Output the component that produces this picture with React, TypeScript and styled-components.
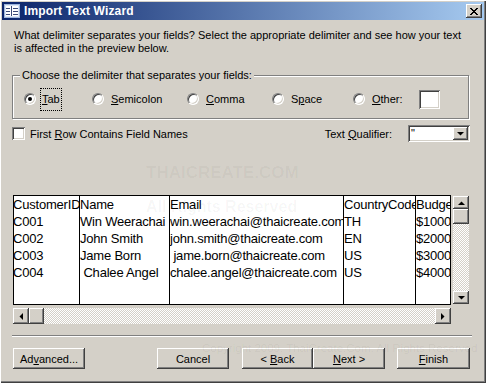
import React from 'react';
import styled, { createGlobalStyle } from 'styled-components';

const GlobalStyle = createGlobalStyle`
  html, body {
    margin: 0;
    padding: 0;
    background: #ffffff;
  }
  body {
    font-family: 'Liberation Sans', Arial, sans-serif;
    font-size: 11px;
    color: #000000;
  }
`;

const raised = `
  box-shadow: inset -1px -1px #404040, inset 1px 1px #ffffff,
    inset -2px -2px #808080, inset 2px 2px #d4d0c8;
`;

const sunken = `
  box-shadow: inset 1px 1px #808080, inset -1px -1px #ffffff,
    inset 2px 2px #404040, inset -2px -2px #d4d0c8;
`;

const checker = `
  background: repeating-conic-gradient(#ffffff 0 25%, #d4d0c8 0 50%) 0 0 / 2px 2px;
`;

const Window = styled.div`
  position: relative;
  width: 486px;
  height: 383px;
  box-sizing: border-box;
  padding: 2px;
  background: #d4d0c8;
  box-shadow: inset 1px 1px #ffffff, inset -1px -1px #404040, inset -2px -2px #808080;
  display: flex;
  flex-direction: column;
  overflow: hidden;
`;

const TitleBar = styled.div`
  height: 18px;
  display: flex;
  align-items: center;
  gap: 4px;
  padding: 0 2px;
  background: linear-gradient(to right, #0a246a, #a6caf0);
  color: #ffffff;
  font-weight: bold;
  font-size: 12px;
  letter-spacing: 0.15px;
`;

const CloseButton = styled.div`
  width: 16px;
  height: 14px;
  margin-left: auto;
  display: flex;
  align-items: center;
  justify-content: center;
  background: #d4d0c8;
  ${raised}
`;

const Body = styled.div`
  display: flex;
  flex-direction: column;
  padding-left: 10px;
`;

const Intro = styled.div`
  margin: 9px 0 0 2px;
  line-height: 13px;
  white-space: nowrap;
`;

const GroupBox = styled.fieldset`
  margin: 14px 0 0 0;
  padding: 0;
  min-width: 0;
  width: 457px;
  box-sizing: border-box;
  border: 1px solid #808080;
  box-shadow: 1px 1px #ffffff, inset 1px 1px #ffffff;
`;

const Legend = styled.legend`
  margin-left: 7px;
  padding: 0 2px;
  line-height: 13px;
  background: #d4d0c8;
`;

const RadioRow = styled.div`
  display: flex;
  align-items: center;
  height: 22px;
  margin: 6px 0 8px 0;
  padding-left: 11px;
`;

const Option = styled.div<{ $w?: number }>`
  display: flex;
  align-items: center;
  gap: 7px;
  width: ${(p) => (p.$w ? `${p.$w}px` : 'auto')};
  flex: none;
`;

const Radio = styled.div<{ $checked?: boolean }>`
  position: relative;
  width: 12px;
  height: 12px;
  border-radius: 50%;
  flex: none;
  background: #ffffff;
  border: 1px solid;
  border-color: #808080 #ffffff #ffffff #808080;
  box-sizing: border-box;
  box-shadow: inset 1px 1px #404040, inset -1px -1px #d4d0c8;

  &::after {
    content: '';
    display: ${(p) => (p.$checked ? 'block' : 'none')};
    position: absolute;
    left: 3px;
    top: 3px;
    width: 4px;
    height: 4px;
    border-radius: 50%;
    background: #000000;
  }
`;

const OptLabel = styled.span<{ $focus?: boolean }>`
  line-height: 13px;
  ${(p) =>
    p.$focus &&
    `
    border: 1px dotted #000000;
    padding: 4px 1px;
    margin-left: -3px;
  `}
`;

const SmallInput = styled.div`
  width: 21px;
  height: 19px;
  margin-left: 9px;
  background: #ffffff;
  ${sunken}
`;

const CheckRow = styled.div`
  display: flex;
  align-items: center;
  width: 458px;
  height: 17px;
  margin-top: 6px;
`;

const CheckBox = styled.div`
  width: 13px;
  height: 13px;
  box-sizing: border-box;
  background: #ffffff;
  ${sunken}
`;

const CheckLabel = styled.span`
  margin-left: 5px;
`;

const QualifierLabel = styled.span`
  margin-left: auto;
  margin-right: 16px;
`;

const Combo = styled.div`
  width: 62px;
  height: 17px;
  box-sizing: border-box;
  display: flex;
  align-items: center;
  padding: 2px;
  background: #ffffff;
  ${sunken}
`;

const ComboText = styled.span`
  flex: 1;
  padding-left: 1px;
  line-height: 13px;
`;

const ArrowButton = styled.div<{ $w?: number; $h?: number }>`
  width: ${(p) => p.$w ?? 16}px;
  height: ${(p) => p.$h ?? 16}px;
  flex: none;
  display: flex;
  align-items: center;
  justify-content: center;
  background: #d4d0c8;
  ${raised}
`;

const PreviewRow = styled.div`
  display: flex;
  gap: 2px;
  margin-top: 53px;
  padding-left: 1px;
  height: 110px;
`;

const Grid = styled.div`
  width: 438px;
  height: 110px;
  box-sizing: border-box;
  border: 1px solid #000000;
  background: #ffffff;
  display: flex;
  overflow: hidden;
  font-size: 13px;
  letter-spacing: -0.2px;
`;

const Column = styled.div<{ $w?: number; $first?: boolean }>`
  width: ${(p) => (p.$w ? `${p.$w}px` : 'auto')};
  flex: ${(p) => (p.$w ? 'none' : '1')};
  box-sizing: border-box;
  border-right: ${(p) => (p.$w ? '1px solid #000000' : 'none')};
  overflow: hidden;
  text-indent: ${(p) => (p.$first ? '-1px' : '0')};
`;

const Cell = styled.div`
  height: 17px;
  line-height: 17px;
  white-space: pre;
`;

const VScroll = styled.div`
  width: 16px;
  margin: 1px 0;
  display: flex;
  flex-direction: column;
  ${checker}
`;

const HScroll = styled.div`
  width: 438px;
  height: 16px;
  margin: 3px 0 0 1px;
  display: flex;
  ${checker}
`;

const Track = styled.div`
  flex: 1;
`;

const Thumb = styled.div<{ $w: number; $h: number }>`
  width: ${(p) => p.$w}px;
  height: ${(p) => p.$h}px;
  flex: none;
  background: #d4d0c8;
  ${raised}
`;

const Separator = styled.div`
  width: 460px;
  margin-top: 11px;
  border-top: 1px solid #808080;
  border-bottom: 1px solid #ffffff;
`;

const ButtonRow = styled.div`
  display: flex;
  width: 458px;
  margin: 11px 0 0 1px;
`;

const Button = styled.div<{ $w?: number; $gap?: number }>`
  width: ${(p) => p.$w ?? 72}px;
  height: 21px;
  margin-left: ${(p) => (p.$gap === undefined ? 0 : `${p.$gap}px`)};
  flex: none;
  display: flex;
  align-items: center;
  justify-content: center;
  white-space: pre;
  background: #d4d0c8;
  ${raised}
`;

const Watermark = styled.div<{ $x: number; $y: number; $size: number; $alpha: number; $bold?: boolean }>`
  position: absolute;
  left: ${(p) => p.$x}px;
  top: ${(p) => p.$y}px;
  font-size: ${(p) => p.$size}px;
  font-weight: ${(p) => (p.$bold ? 'bold' : 'normal')};
  color: rgba(0, 0, 0, ${(p) => p.$alpha});
  white-space: nowrap;
  pointer-events: none;
`;

const TitleIcon = () => (
  <svg width="16" height="14" viewBox="0 0 16 14" shapeRendering="crispEdges">
    <rect x="0.5" y="0.5" width="15" height="13" fill="#dce6f4" stroke="#9fb6dc" />
    <rect x="2" y="2" width="12" height="10" fill="#ffffff" />
    <rect x="2" y="4" width="4" height="1" fill="#3a4a78" />
    <rect x="2" y="7" width="4" height="1" fill="#3a4a78" />
    <rect x="2" y="10" width="4" height="1" fill="#3a4a78" />
    <rect x="7" y="2" width="1" height="10" fill="#3a4a78" />
    <rect x="9" y="4" width="5" height="1" fill="#3a4a78" />
    <rect x="9" y="7" width="5" height="1" fill="#3a4a78" />
    <rect x="9" y="10" width="5" height="1" fill="#3a4a78" />
  </svg>
);

const CloseGlyph = () => (
  <svg width="8" height="7" viewBox="0 0 8 7" shapeRendering="crispEdges">
    <path
      fill="#000"
      d="M0 0h2v1h-2z M6 0h2v1h-2z M1 1h2v1h-2z M5 1h2v1h-2z M2 2h4v1h-4z M3 3h2v1h-2z M2 4h4v1h-4z M1 5h2v1h-2z M5 5h2v1h-2z M0 6h2v1h-2z M6 6h2v1h-2z"
    />
  </svg>
);

const Arrow = ({ dir }: { dir: 'up' | 'down' | 'left' | 'right' }) => {
  const pts = {
    up: '0,4 7,4 3.5,0.5',
    down: '0,0 7,0 3.5,3.5',
    left: '4,0 4,7 0.5,3.5',
    right: '0,0 0,7 3.5,3.5',
  }[dir];
  const vertical = dir === 'up' || dir === 'down';
  return (
    <svg width={vertical ? 7 : 4} height={vertical ? 4 : 7} viewBox={vertical ? '0 0 7 4' : '0 0 4 7'}>
      <polygon points={pts} fill="#000" />
    </svg>
  );
};

const columns: { w?: number; cells: string[] }[] = [
  { w: 66, cells: ['CustomerID', 'C001', 'C002', 'C003', 'C004'] },
  { w: 90, cells: ['Name', 'Win Weerachai', 'John Smith', 'Jame Born', ' Chalee Angel'] },
  {
    w: 174,
    cells: [
      'Email',
      'win.weerachai@thaicreate.com',
      'john.smith@thaicreate.com',
      ' jame.born@thaicreate.com',
      'chalee.angel@thaicreate.com',
    ],
  },
  { w: 72, cells: ['CountryCode', 'TH', 'EN', 'US', 'US'] },
  { cells: ['Budget', '$1000', '$2000', '$3000', '$4000'] },
];

const App = () => {
  return (
    <>
      <GlobalStyle />
      <Window>
        <TitleBar>
          <TitleIcon />
          <span>Import Text Wizard</span>
          <CloseButton>
            <CloseGlyph />
          </CloseButton>
        </TitleBar>

        <Body>
          <Intro>
            What delimiter separates your fields? Select the appropriate delimiter and see how your text
            <br />
            is affected in the preview below.
          </Intro>

          <GroupBox>
            <Legend>Choose the delimiter that separates your fields:</Legend>
            <RadioRow>
              <Option $w={68}>
                <Radio $checked />
                <OptLabel $focus>
                  <u>T</u>ab
                </OptLabel>
              </Option>
              <Option $w={95}>
                <Radio />
                <OptLabel>
                  <u>S</u>emicolon
                </OptLabel>
              </Option>
              <Option $w={85}>
                <Radio />
                <OptLabel>
                  <u>C</u>omma
                </OptLabel>
              </Option>
              <Option $w={81}>
                <Radio />
                <OptLabel>
                  S<u>p</u>ace
                </OptLabel>
              </Option>
              <Option>
                <Radio />
                <OptLabel>
                  <u>O</u>ther:
                </OptLabel>
                <SmallInput />
              </Option>
            </RadioRow>
          </GroupBox>

          <CheckRow>
            <CheckBox />
            <CheckLabel>
              First <u>R</u>ow Contains Field Names
            </CheckLabel>
            <QualifierLabel>
              Text <u>Q</u>ualifier:
            </QualifierLabel>
            <Combo>
              <ComboText>"</ComboText>
              <ArrowButton $w={15} $h={13}>
                <Arrow dir="down" />
              </ArrowButton>
            </Combo>
          </CheckRow>

          <PreviewRow>
            <Grid>
              {columns.map((col, i) => (
                <Column key={i} $w={col.w} $first={i === 0}>
                  {col.cells.map((c, j) => (
                    <Cell key={j}>{c}</Cell>
                  ))}
                </Column>
              ))}
            </Grid>
            <VScroll>
              <ArrowButton $h={13}>
                <Arrow dir="up" />
              </ArrowButton>
              <Thumb $w={16} $h={15} />
              <Track />
              <ArrowButton $h={13}>
                <Arrow dir="down" />
              </ArrowButton>
            </VScroll>
          </PreviewRow>

          <HScroll>
            <ArrowButton>
              <Arrow dir="left" />
            </ArrowButton>
            <Thumb $w={15} $h={16} />
            <Track />
            <ArrowButton>
              <Arrow dir="right" />
            </ArrowButton>
          </HScroll>

          <Separator />

          <ButtonRow>
            <Button>
              Ad<u>v</u>anced...
            </Button>
            <Button $gap={72}>Cancel</Button>
            <Button $gap={13} $w={71}>
              {'< '}
              <u>B</u>ack
            </Button>
            <Button>
              <u>N</u>ext{' >'}
            </Button>
            <Button $gap={12} $w={73}>
              <u>F</u>inish
            </Button>
          </ButtonRow>
        </Body>

        <Watermark $x={146} $y={163} $size={17} $alpha={0.04} $bold>
          THAICREATE.COM
        </Watermark>
        <Watermark $x={146} $y={198} $size={16} $alpha={0.04} $bold>
          All Rights Reserved
        </Watermark>
        <Watermark $x={202} $y={342} $size={11.5} $alpha={0.05}>
          Copyright 2009, ThaiCreate.Com. All Rights Reserved
        </Watermark>
      </Window>
    </>
  );
};

export default App;
